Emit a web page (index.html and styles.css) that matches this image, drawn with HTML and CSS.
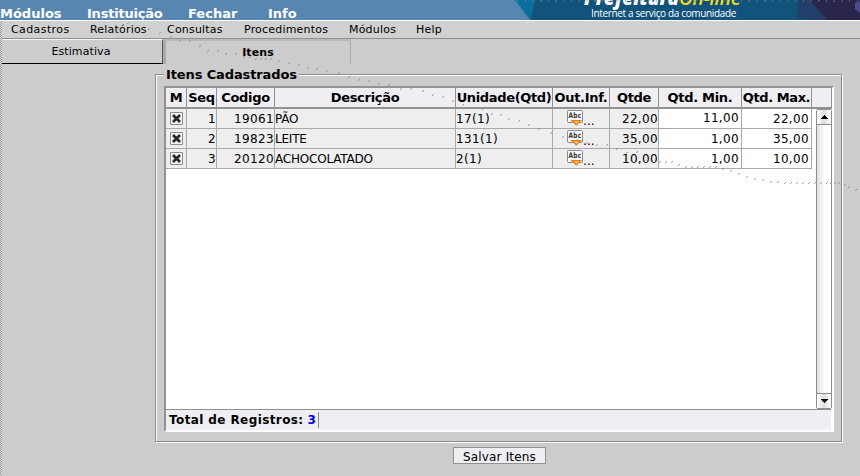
FILE: index.html
```
<!DOCTYPE html>
<html lang="pt-BR">
<head>
<meta charset="utf-8">
<title>Itens Cadastrados</title>
<link rel="stylesheet" href="styles.css">
</head>
<body>
<header class="top">
  <svg class="banner" width="345" height="20" viewBox="0 0 345 20"><path d="M0 0h20l-5 20z" fill="#086f9f"/><path d="M20 0h325v20H15z" fill="#12537b"/><path d="M283 0h12l17 20h-15l-15-2z" fill="#213f69"/><path d="M295 0h50v20h-33z" fill="#29254b"/><path d="m340 3 5-2v12l-5-4z" fill="#4c4b91"/></svg>
  <nav class="modules"><span>Módulos</span><span class="tight">Instituição</span><span>Fechar</span><span>Info</span></nav>
  <div class="brand"><div class="logo"><b>Prefeitura</b><i>On-line</i></div><div class="slogan">Internet a serviço da comunidade</div></div>
  <div class="stipple"></div>
</header>
<nav class="menu"><span class="wide">Cadastros</span><span>Relatórios</span><span>Consultas</span><span>Procedimentos</span><span>Módulos</span><span>Help</span></nav>
<div class="tabs"><div class="tab">Estimativa</div><div class="tab active">Itens</div></div>
<main class="group">
  <h1><span>Itens Cadastrados</span></h1>
  <section class="panel">
    <div class="row head"><div>M</div><div>Seq</div><div>Codigo</div><div>Descrição</div><div class="unit">Unidade(Qtd)</div><div>Out.Inf.</div><div>Qtde</div><div>Qtd. Min.</div><div class="max">Qtd. Max.</div><div></div></div>
    <div class="body">
      <div class="rows">
        <div class="row"><div><svg width="13" height="13"><use href="#check"/></svg></div><div>1</div><div>19061</div><div>PÃO</div><div>17(1)</div><div class="info"><svg width="17" height="16"><use href="#abc"/></svg><span>...</span></div><div>22,00</div><div class="edit">11,00</div><div>22,00</div></div>
        <div class="row"><div><svg width="13" height="13"><use href="#check"/></svg></div><div>2</div><div>19823</div><div>LEITE</div><div>131(1)</div><div class="info"><svg width="17" height="16"><use href="#abc"/></svg><span>...</span></div><div>35,00</div><div>1,00</div><div>35,00</div></div>
        <div class="row"><div><svg width="13" height="13"><use href="#check"/></svg></div><div>3</div><div>20120</div><div>ACHOCOLATADO</div><div>2(1)</div><div class="info"><svg width="17" height="16"><use href="#abc"/></svg><span>...</span></div><div>10,00</div><div>1,00</div><div>10,00</div></div>
      </div>
      <div class="scroll">
        <div class="arrow"><svg width="7" height="4" shape-rendering="crispEdges"><path d="M3 0h1v1h1v1h1v1h1v1H0V3h1V2h1V1h1z"/></svg></div>
        <div class="arrow"><svg width="7" height="4" shape-rendering="crispEdges"><path d="M0 0h7v1H6v1H5v1H4v1H3V3H2V2H1V1H0z"/></svg></div>
      </div>
    </div>
    <footer class="total"><span>Total de Registros:</span><b>3</b></footer>
  </section>
</main>
<button class="save">Salvar Itens</button>
<svg class="defs" width="0" height="0">
  <symbol id="check" viewBox="0 0 13 13"><path d="M.5.5h12v12H.5z" fill="#f4f4f4" stroke="#8d8d8d"/><path d="m3 3 7 7m0-7-7 7" stroke="#292929" stroke-width="2.8"/></symbol>
  <symbol id="abc" viewBox="0 0 17 16"><rect x=".5" y=".5" width="15" height="12" rx="1" fill="#f8f8f8" stroke="#8b8b8b"/><text x="8" y="8" class="abc" text-anchor="middle" textLength="13" lengthAdjust="spacingAndGlyphs">Abc</text><path d="M5.2 10.7h8.2L9.3 14.8z" fill="#ffe2b0" stroke="#f47b0d" stroke-width="1.5"/></symbol>
</svg>
<svg class="trail" width="860" height="476"><g id="trail"></g></svg>
<div class="edge"></div>
<script src="trail.js"></script>
</body>
</html>
```
FILE: styles.css
```
*{box-sizing:border-box}
body{margin:0;width:860px;height:476px;overflow:hidden;background:#ccc;font:11px "DejaVu Sans",sans-serif;color:#000;position:relative}
.top{height:21px;background:#5886b3;border-bottom:1px solid #fff;position:relative;overflow:hidden}
.banner{position:absolute;right:0;top:0}
.modules{display:grid;grid-template-columns:87px 101px 80px 60px;padding-top:5px;font-size:13px;line-height:17px;font-weight:bold;color:#fff}
.modules span,.menu span{white-space:nowrap;justify-self:start}
.modules .tight{letter-spacing:-.22px}
.brand{position:absolute;left:584px;top:-11px;width:170px;color:#fff}
.logo{font:19px/18px "Open Sans",sans-serif;white-space:nowrap;height:18px;letter-spacing:-.15px}
.logo b{font-style:italic;font-weight:800}
.logo i{color:#f3da18;font-weight:600}
.slogan{font:10px/12px "Open Sans",sans-serif;padding-left:7px;white-space:nowrap;letter-spacing:-.35px}
.stipple{position:absolute;left:0;top:0;width:860px;height:2px;background:repeating-linear-gradient(115deg,#8888 0 1px,transparent 1px 7px)}
.menu{height:18px;background:#d0d0d0;border-bottom:1px solid #8f8f8f;display:grid;grid-template-columns:79px 77px 77px 105px 67px 50px;padding-left:11px;line-height:17px;letter-spacing:.2px}
.menu .wide{letter-spacing:.4px}
.tabs{display:flex;height:26px}
.tab{width:163px;height:25px;border-top:1px solid #f5f5f5;border-right:1px solid #555;border-bottom:1px solid #000;line-height:24px;text-align:center;letter-spacing:.1px}
.tab.active{width:188px;height:25px;border-top:2px solid #bababa;border-left:3px solid #aaa;border-right:1px solid #aaa;border-bottom:0;font-weight:bold;line-height:23px}
.group{margin:9px 0 0 155px;width:687px;height:368px;border:1px solid #8c8c8c;box-shadow:inset 1px 1px #fff,1px 1px #fff;padding:0 8px}
.group h1{margin:-9px 0 3px;height:17px;font-size:13px;line-height:17px;letter-spacing:-.12px}
.group h1 span{display:inline-block;background:#ccc;padding:0 2px}
.panel{width:670px;height:346px;border:2px solid;border-color:#929292 #fff #fff #929292;background:#fff}
.row{display:grid;grid-template-columns:21px 30px 58px 181px 97px 57px 49px 83px 70px 20px;height:20px;font-size:12px;line-height:21px}
.row>div{border-right:1px solid #a9a9a9;border-bottom:1px solid #a9a9a9;text-align:right;background:#eee;white-space:nowrap;overflow:hidden}
.head{height:21px;font-weight:bold;background:#eeeef3}
.head.row{height:21px;font-size:13px;letter-spacing:-.3px}
.head.row>div{text-align:center;background:#eeeef3;border-right-color:#929292;border-bottom:2px solid #929292;line-height:20px}
.head.row>.unit{letter-spacing:-.35px}
.head.row>.max{letter-spacing:-.42px}
.body{height:300px;display:flex;justify-content:space-between}
.rows .row{grid-template-columns:21px 30px 58px 181px 97px 57px 49px 83px 70px;letter-spacing:.35px}
.rows .row>div:first-child{padding:3px 4px;line-height:0;text-align:left}
.rows .row>div:nth-child(4),.rows .row>div:nth-child(5){text-align:left}
.rows .row>div:nth-child(4){letter-spacing:-.2px}
.rows .row>div:nth-child(n+8){background:#fff;padding-right:2px}
.rows .row>.edit{padding-right:0;line-height:19px}
.rows .row>.info{display:flex;padding-left:14px}
.info svg{margin-top:1px;flex:none}
.info span{line-height:24px;margin-left:-1px;letter-spacing:.1px}
.abc{font:bold 7.5px "DejaVu Sans",sans-serif;fill:#333}
.scroll{width:16px;height:300px;border:1px solid #8e8e8e;border-radius:2px;background:linear-gradient(90deg,#e2e2e7,#fff 60%);display:flex;flex-direction:column;justify-content:space-between}
.arrow{height:15px;display:grid;place-items:center;border-bottom:1px solid #8e8e8e;background:linear-gradient(90deg,#fff,#ddd,#fff)}
.arrow+.arrow{border-top:1px solid #8e8e8e;border-bottom:0}
.total{height:21px;border-top:1px solid #8e8e8e;background:#eeeef3;margin-right:1px;padding:2px 0 0 3px;font-size:12px;line-height:17px;font-weight:bold;letter-spacing:.4px;display:flex}
.total b{margin-left:4px;padding-right:2px;color:#00e;height:16px;border-right:1px solid #888}
.save{display:block;margin:5px 0 0 453px;width:93px;height:17px;padding:2px 0 0;border:1px solid #929292;background:#eeeef3;font:12px/15px "DejaVu Sans",sans-serif;letter-spacing:.15px;color:#000}
.defs{position:absolute}
.trail{position:absolute;left:0;top:0;pointer-events:none}
.trail path{stroke:#888;stroke-width:.8}
.edge{position:absolute;left:0;top:21px;width:2px;height:455px;background:repeating-conic-gradient(#999 0 25%,#ddd 0 50%) 0 0/2px 2px}
```
FILE: trail.js
```
const points = [[128,23],[149,29],[160,33],[171,37],[180,41],[190,41],[200,46],[208,51],[218,51],[226,54],[236,54],[244,57],[250,57],[256,59],[261,59],[266,59],[271,59],[279,61],[289,63],[299,65],[308,68],[317,69],[327,71],[339,73],[349,77],[359,80],[369,81],[379,84],[389,85],[401,89],[411,89],[423,91],[433,95],[443,97],[453,101],[463,105],[473,108],[483,109],[492,114],[501,115],[509,119],[519,121],[529,125],[539,129],[551,133],[563,137],[577,140],[587,143],[597,145],[607,145],[617,149],[627,153],[637,152],[647,155],[660,162],[666,162],[672,162],[679,165],[686,167],[692,167],[698,167],[704,167],[710,167],[716,167],[723,169],[731,171],[739,174],[747,177],[755,179],[763,180],[771,182],[778,182],[785,183],[791,183],[797,183],[803,183],[809,183],[815,183],[821,183],[827,183],[831,183],[835,183],[839,183],[845,185],[849,187],[856,190]];
for (const [x, y] of points) {
  const mark = document.createElementNS("http://www.w3.org/2000/svg", "path");
  mark.setAttribute("d", `M${x - 1} ${y + 1}l2-2`);
  document.getElementById("trail").append(mark);
}
```
